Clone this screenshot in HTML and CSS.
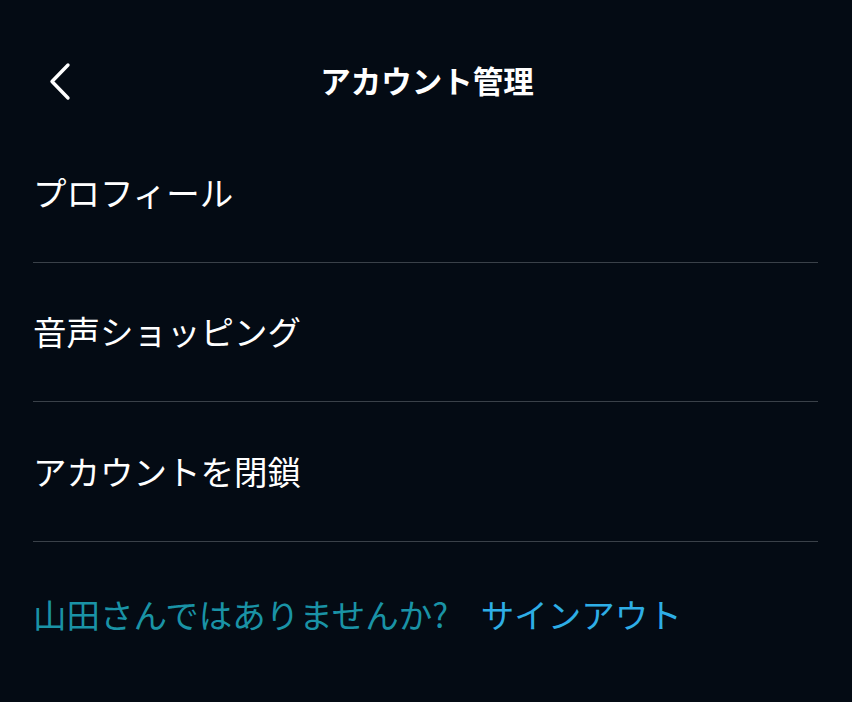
FILE: index.html
```html
<!DOCTYPE html>
<html lang="ja">
<head>
<meta charset="utf-8">
<title>アカウント管理</title>
<link rel="stylesheet" href="styles.css">
</head>
<body>
<div class="screen">
  <header class="topbar">
    <button class="back" aria-label="戻る">
      <svg width="24" height="40" viewBox="0 0 24 40">
        <polyline points="19,3 3,19.5 19,36" fill="none" stroke="#ffffff" stroke-width="3.4" stroke-linecap="round" stroke-linejoin="round"/>
      </svg>
    </button>
    <h1 class="title">アカウント管理</h1>
  </header>
  <ul class="menu">
    <li class="menu-item">プロフィール</li>
    <li class="menu-item">音声ショッピング</li>
    <li class="menu-item">アカウントを閉鎖</li>
  </ul>
  <p class="signout-row">
    <span class="question">山田さんではありませんか?</span>
    <a class="signout" href="#">サインアウト</a>
  </p>
</div>
</body>
</html>
```

FILE: styles.css
```css
html, body {
  margin: 0;
  padding: 0;
  background: #040b14;
}

body {
  font-family: "Noto Sans CJK JP", "Noto Sans", sans-serif;
  color: #ffffff;
}

.screen {
  width: 852px;
  height: 702px;
  overflow: hidden;
  background: #040b14;
}

.topbar {
  position: relative;
  height: 42px;
  padding: 59px 0 22px;
  display: flex;
  align-items: center;
  justify-content: center;
}

.back {
  position: absolute;
  left: 49px;
  top: 62px;
  width: 24px;
  height: 40px;
  padding: 0;
  border: 0;
  background: none;
  display: flex;
}

.title {
  margin: 0 0 0 2px;
  font-size: 30.5px;
  font-weight: 700;
  line-height: 42px;
  letter-spacing: 0;
}

.menu {
  list-style: none;
  margin: 0 34px 0 33px;
  padding: 0;
}

.menu-item {
  display: flex;
  align-items: center;
  border-bottom: 1px solid #3a4149;
  font-size: 33.5px;
  line-height: 1;
  padding-left: 0;
  padding-bottom: 2px;
  box-sizing: border-box;
  height: 139.5px;
}

.signout-row {
  margin: 50px 0 0 33px;
  font-size: 33.5px;
  line-height: 44px;
  white-space: nowrap;
}

.question {
  color: #1a93a6;
}

.signout {
  color: #2eaee6;
  text-decoration: none;
  margin-left: 25px;
}
```
